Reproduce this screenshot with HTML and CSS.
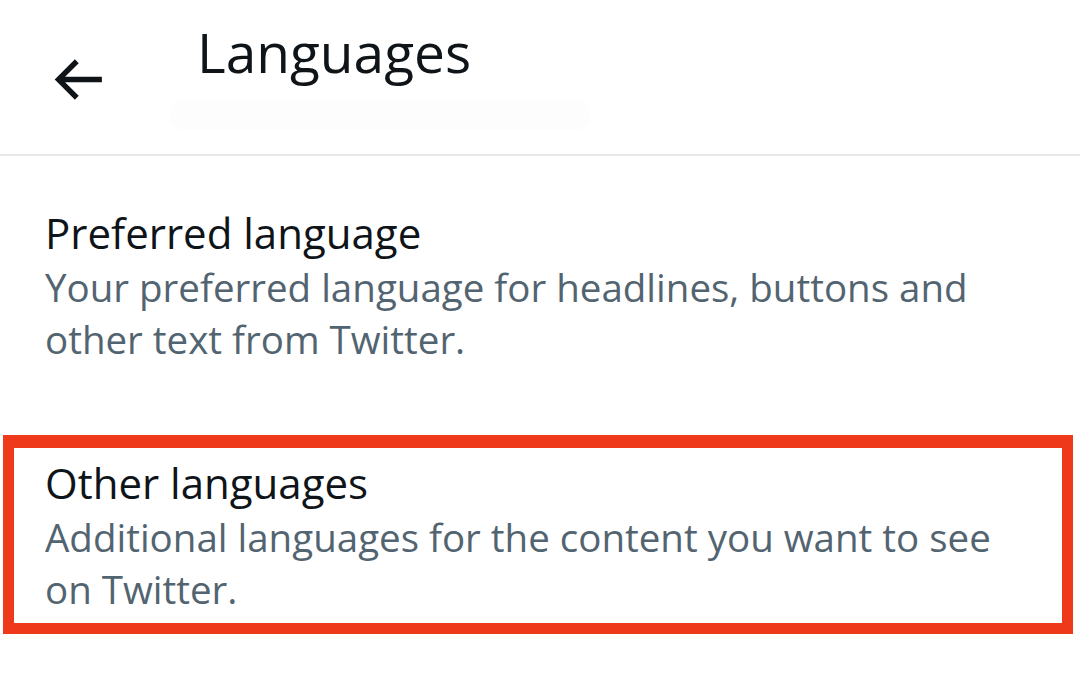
FILE: index.html
```html
<!DOCTYPE html>
<html lang="en">
<head>
<meta charset="UTF-8">
<meta name="viewport" content="width=device-width, initial-scale=1.0">
<title>Languages</title>
<link rel="stylesheet" href="styles.css">
</head>
<body>
<div class="page">
  <!-- Header -->
  <div class="header">
    <a href="#" class="back-btn">
      <svg viewBox="0 0 24 24" width="65" height="65"><path d="M7.414 13l5.043 5.04-1.414 1.42L3.586 12l7.457-7.46 1.414 1.42L7.414 11H21v2H7.414z"></path></svg>
    </a>
    <div class="header-title">Languages</div>
    <div class="header-ghost"></div>
  </div>

  <!-- Settings list -->
  <div class="settings">
    <a href="#" class="setting">
      <div class="setting-title">Preferred language</div>
      <div class="setting-desc">Your preferred language for headlines, buttons and other text from Twitter.</div>
    </a>
    <a href="#" class="setting setting-highlight">
      <div class="setting-title">Other languages</div>
      <div class="setting-desc">Additional languages for the content you want to see on Twitter.</div>
    </a>
  </div>
</div>
</body>
</html>
```

FILE: styles.css
```css
/* General Styles */
body {
  font-family: "Open Sans", "Noto Sans", Arial, sans-serif;
  margin: 0;
  padding: 0;
  background-color: #fff;
  color: #0f1419;
}
.page {
  width: 1080px;
  height: 676px;
  overflow: hidden;
}
/* Header */
.header {
  position: relative;
  height: 154px;
  display: flex;
  align-items: flex-start;
  border-bottom: 2px solid #e7e7e7;
}
.back-btn {
  display: flex;
  margin: 47px 0 0 45px;
  color: #0f1419;
}
.back-btn svg {
  fill: currentColor;
}
.header-title {
  margin: 17px 0 0 87px;
  font-size: 55px;
  font-weight: 500;
  line-height: 70px;
}
/* blurred subtitle left over under the title */
.header-ghost {
  position: absolute;
  left: 170px;
  top: 100px;
  width: 420px;
  height: 30px;
  background-color: #fdfdfd;
  border-radius: 12px;
}
/* Settings list */
.settings {
  display: flex;
  flex-direction: column;
}
.setting {
  display: block;
  padding: 49px 0 0 45px;
  color: inherit;
  text-decoration: none;
}
.setting-title {
  font-size: 42px;
  line-height: 56px;
}
.setting-desc {
  font-size: 38.5px;
  line-height: 52px;
  color: #536471;
  max-width: 960px;
}
.setting-highlight {
  margin: 70px 0 0 3px;
  width: 1017px;
  padding: 7px 0 8px 31px;
  border: 11px solid #ee3a1a;
  border-top-width: 13px;
}
```
